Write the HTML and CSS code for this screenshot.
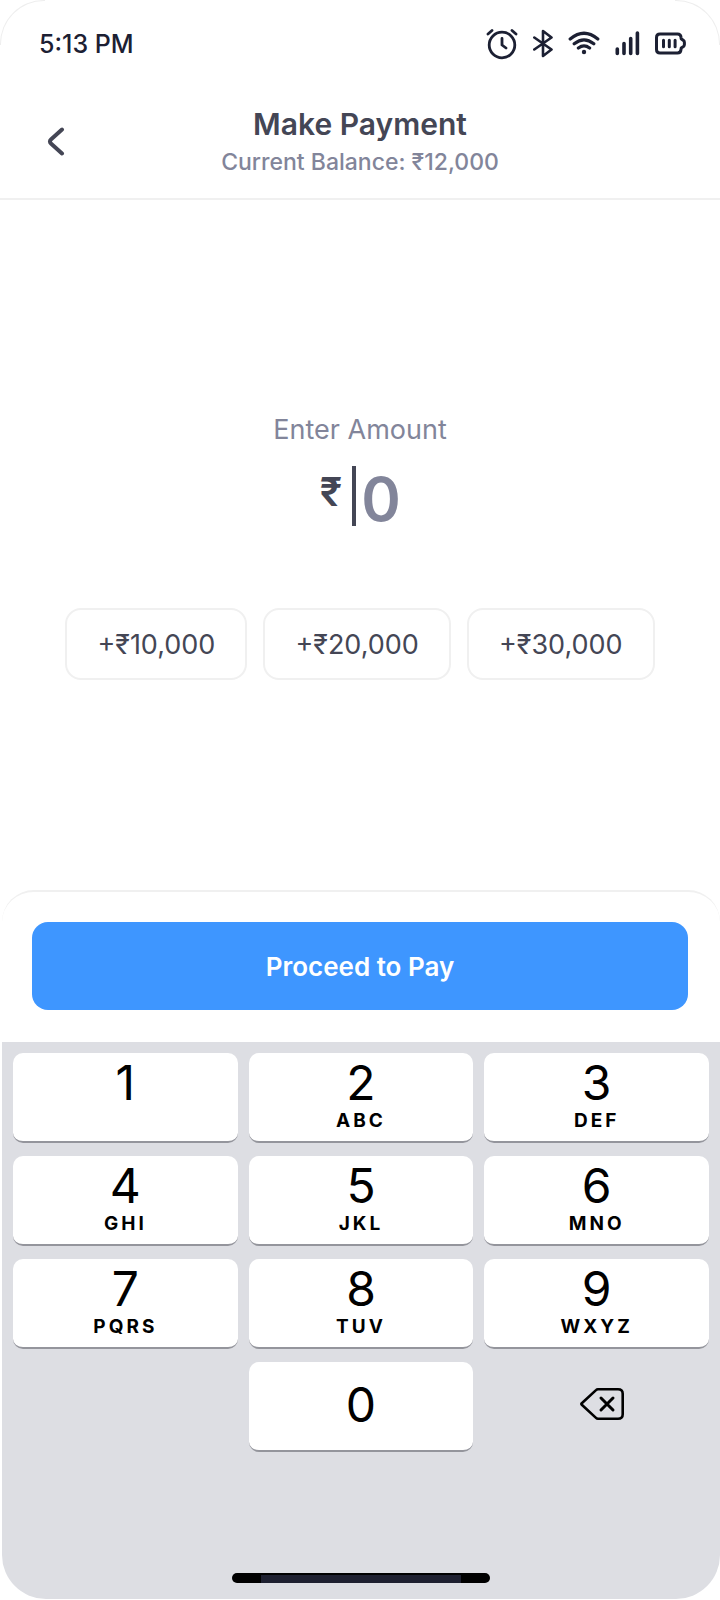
FILE: index.html
```html
<!DOCTYPE html>
<html lang="en">
<head>
<meta charset="utf-8">
<meta name="viewport" content="width=device-width, initial-scale=1">
<title>Make Payment</title>
<link rel="stylesheet" href="styles.css">
</head>
<body>
<div class="screen">
  <div class="status">
    <span class="clock">5:13 PM</span>
    <div class="status-icons">
      <svg width="32" height="32" viewBox="0 0 32 32" fill="none" stroke="currentColor" stroke-width="2.8" stroke-linecap="round" stroke-linejoin="round" aria-hidden="true"><circle cx="16" cy="17" r="12.800"/><path d="M16 10.500V17l4 3M2 6l4-3.500M30 6l-4-3.500"/></svg>
      <svg width="20" height="32" viewBox="0 0 20 32" fill="none" stroke="currentColor" stroke-width="2.600" stroke-linecap="round" stroke-linejoin="round" aria-hidden="true"><path d="M1.300 9.500 18.500 21.500 10 28V3l8.500 6.500L1.300 21.500"/></svg>
      <svg width="32" height="32" viewBox="0 0 32 32" fill="none" stroke="currentColor" stroke-width="3.200" stroke-linecap="round" aria-hidden="true"><path d="M2.200 11Q16-.5 29.800 11M6.200 15.800Q16 8 25.800 15.800M10.400 20Q16 15.800 21.600 20"/><circle cx="16" cy="24" r="2.200" fill="currentColor" stroke="none"/></svg>
      <svg width="25" height="32" viewBox="0 0 25 32" fill="none" stroke="currentColor" stroke-width="3.600" stroke-linecap="round" aria-hidden="true"><path d="M2.300 21v4.500M9 15.500v10M15.700 10.500v15M22.400 5v20.500"/></svg>
      <svg width="31" height="32" viewBox="0 0 31 32" fill="none" stroke="currentColor" stroke-width="3" stroke-linecap="round" stroke-linejoin="round" aria-hidden="true"><path d="M5 6h17.500q3.200 0 3.500 3.200l.2 1.500 2.300 1.800q.9.700.9 2v2q0 1.300-.9 2L26.200 20l-.2 1.500q-.3 3.500-3.500 3.500H5q-3.500 0-3.500-3.500v-12Q1.500 6 5 6zM8.500 12.200v6.600M14.300 12.200v6.600M20.100 12.200v6.600"/></svg>
    </div>
  </div>

  <header class="header">
    <button class="back" type="button" aria-label="Back">
      <svg width="18" height="30" viewBox="0 0 18 30" fill="none" stroke="currentColor" stroke-width="4" stroke-linecap="round" stroke-linejoin="round" aria-hidden="true"><path d="M15 2.500 4.200 12.200Q1.600 14.500 4.200 16.800L15 26.500"/></svg>
    </button>
    <div class="heading">
      <h1 class="title">Make Payment</h1>
      <p class="balance">Current Balance: ₹12,000</p>
    </div>
  </header>

  <main class="entry">
    <label class="entry-label" for="amount">Enter Amount</label>
    <div class="amount">
      <span class="currency">₹</span>
      <input class="amount-input" id="amount" type="text" inputmode="numeric" placeholder="0">
    </div>
    <div class="chips">
      <button class="chip" type="button">+₹10,000</button>
      <button class="chip" type="button">+₹20,000</button>
      <button class="chip" type="button">+₹30,000</button>
    </div>
  </main>

  <div class="sheet">
    <button class="pay" type="button">Proceed to Pay</button>
  </div>

  <div class="keyboard">
    <div class="keys">
      <button class="key" type="button"><span class="digit">1</span></button>
      <button class="key" type="button"><span class="digit">2</span><span class="letters">ABC</span></button>
      <button class="key" type="button"><span class="digit">3</span><span class="letters">DEF</span></button>
      <button class="key" type="button"><span class="digit">4</span><span class="letters">GHI</span></button>
      <button class="key" type="button"><span class="digit">5</span><span class="letters">JKL</span></button>
      <button class="key" type="button"><span class="digit">6</span><span class="letters">MNO</span></button>
      <button class="key" type="button"><span class="digit">7</span><span class="letters">PQRS</span></button>
      <button class="key" type="button"><span class="digit">8</span><span class="letters">TUV</span></button>
      <button class="key" type="button"><span class="digit">9</span><span class="letters">WXYZ</span></button>
      <button class="key key-zero" type="button"><span class="digit">0</span></button>
      <button class="key-delete" type="button" aria-label="Delete">
        <svg width="44" height="32" viewBox="0 0 44 32" fill="none" stroke="currentColor" stroke-width="2.600" stroke-linecap="round" stroke-linejoin="round" aria-hidden="true"><path d="M18 1.300h20q4.700 0 4.700 4.500v20.400q0 4.500-4.700 4.500H18q-1.200 0-2-.8L1.800 16.800q-.8-.8 0-1.600L16 2.100q.8-.8 2-.8z"/><path d="m21 10 12 12m0-12L21 22" stroke-width="3"/></svg>
      </button>
    </div>
    <div class="home-bar"></div>
  </div>
</div>
</body>
</html>
```
FILE: styles.css
```css
* {
  box-sizing: border-box;
}

body {
  margin: 0;
  background: #fff;
  font-family: Inter, "Noto Sans", sans-serif;
  color: #444655;
}

button,
input {
  margin: 0;
  padding: 0;
  border: 0;
  background: none;
  color: inherit;
  font-family: inherit;
}

svg {
  display: block;
}

.screen {
  position: relative;
  display: flex;
  flex-direction: column;
  min-height: 100vh;
  padding-bottom: 1px;
}

/* Rounded device corners */
.screen::before,
.screen::after {
  content: "";
  position: absolute;
  top: 0;
  width: 44px;
  height: 44px;
}

.screen::before {
  left: 0;
  border-top: 1px solid #eee;
  border-left: 1px solid #eee;
  border-top-left-radius: 44px;
}

.screen::after {
  right: 0;
  border-top: 1px solid #eee;
  border-right: 1px solid #eee;
  border-top-right-radius: 44px;
}

.status {
  display: flex;
  align-items: center;
  justify-content: space-between;
  height: 88px;
  padding: 0 34px 0 39px;
  color: #1c2033;
}

.clock {
  font-size: 25px;
  font-weight: 500;
}

.status-icons {
  display: flex;
  align-items: center;
  gap: 15px;
}

.header {
  display: grid;
  grid-template-columns: 48px 1fr 48px;
  align-items: center;
  height: 112px;
  padding: 0 32px 2px;
  border-bottom: 2px solid #f0f0f0;
}

.back {
  display: flex;
  align-items: center;
  justify-content: center;
  height: 48px;
}

.heading {
  text-align: center;
}

.title,
.balance {
  margin: 0;
}

.title {
  font-size: 30px;
  line-height: 40px;
  font-weight: 600;
}

.balance {
  font-size: 23px;
  line-height: 36px;
  font-weight: 500;
  color: #82859a;
}

.entry {
  flex: 1;
  display: flex;
  flex-direction: column;
  align-items: center;
  justify-content: center;
}

.entry-label {
  font-size: 27px;
  line-height: 40px;
  color: #82859a;
}

.amount {
  display: flex;
  align-items: flex-start;
  gap: 10px;
  margin-top: 16px;
}

.currency {
  font-size: 40px;
  line-height: 52px;
  font-weight: 600;
}

.amount-input {
  width: 48px;
  height: 60px;
  padding: 6px 0 0 5px;
  border-left: 4px solid #444655;
  font-size: 60px;
  line-height: 54px;
  font-weight: 600;
  outline: 0;
}

.amount-input::placeholder {
  color: #82859a;
  opacity: 1;
}

.chips {
  display: flex;
  gap: 16px;
  margin-top: 82px;
}

.chip {
  height: 72px;
  padding: 0 30px;
  border: 2px solid #f0f0f0;
  border-radius: 16px;
  font-size: 27px;
}

.sheet {
  margin: 0 0 0 2px;
  padding: 30px 32px 32px 30px;
  border-top: 2px solid #f0f0f0;
  border-radius: 32px 32px 0 0;
}

.pay {
  display: block;
  width: 100%;
  height: 88px;
  border-radius: 16px;
  background: #3e96ff;
  color: #fff;
  font-size: 26px;
  font-weight: 600;
}

.keyboard {
  margin-left: 2px;
  padding: 11px 11px 16px;
  border-radius: 0 0 44px 44px;
  background: #dddee3;
  color: #000;
}

.keys {
  display: grid;
  grid-template-columns: repeat(3, 1fr);
  gap: 13px 11px;
}

.key {
  display: flex;
  flex-direction: column;
  align-items: center;
  height: 90px;
  padding-top: 6px;
  border-bottom: 2px solid #94959c;
  border-radius: 10px;
  background: #fff;
}

.key-zero {
  grid-column: 2;
  justify-content: center;
  padding: 0 0 2px;
}

.digit {
  font-size: 48px;
  line-height: 48px;
}

.letters {
  font-size: 19px;
  line-height: 28px;
  font-weight: 700;
  letter-spacing: 3px;
}

.key-delete {
  display: flex;
  align-items: center;
  justify-content: center;
  padding: 0 0 6px 10px;
}

.home-bar {
  width: 258px;
  height: 10px;
  margin: 121px auto 0;
  border-radius: 5px;
  background: linear-gradient(#1e2030, #1e2030) center bottom / 200px 8px no-repeat #000;
}
```
